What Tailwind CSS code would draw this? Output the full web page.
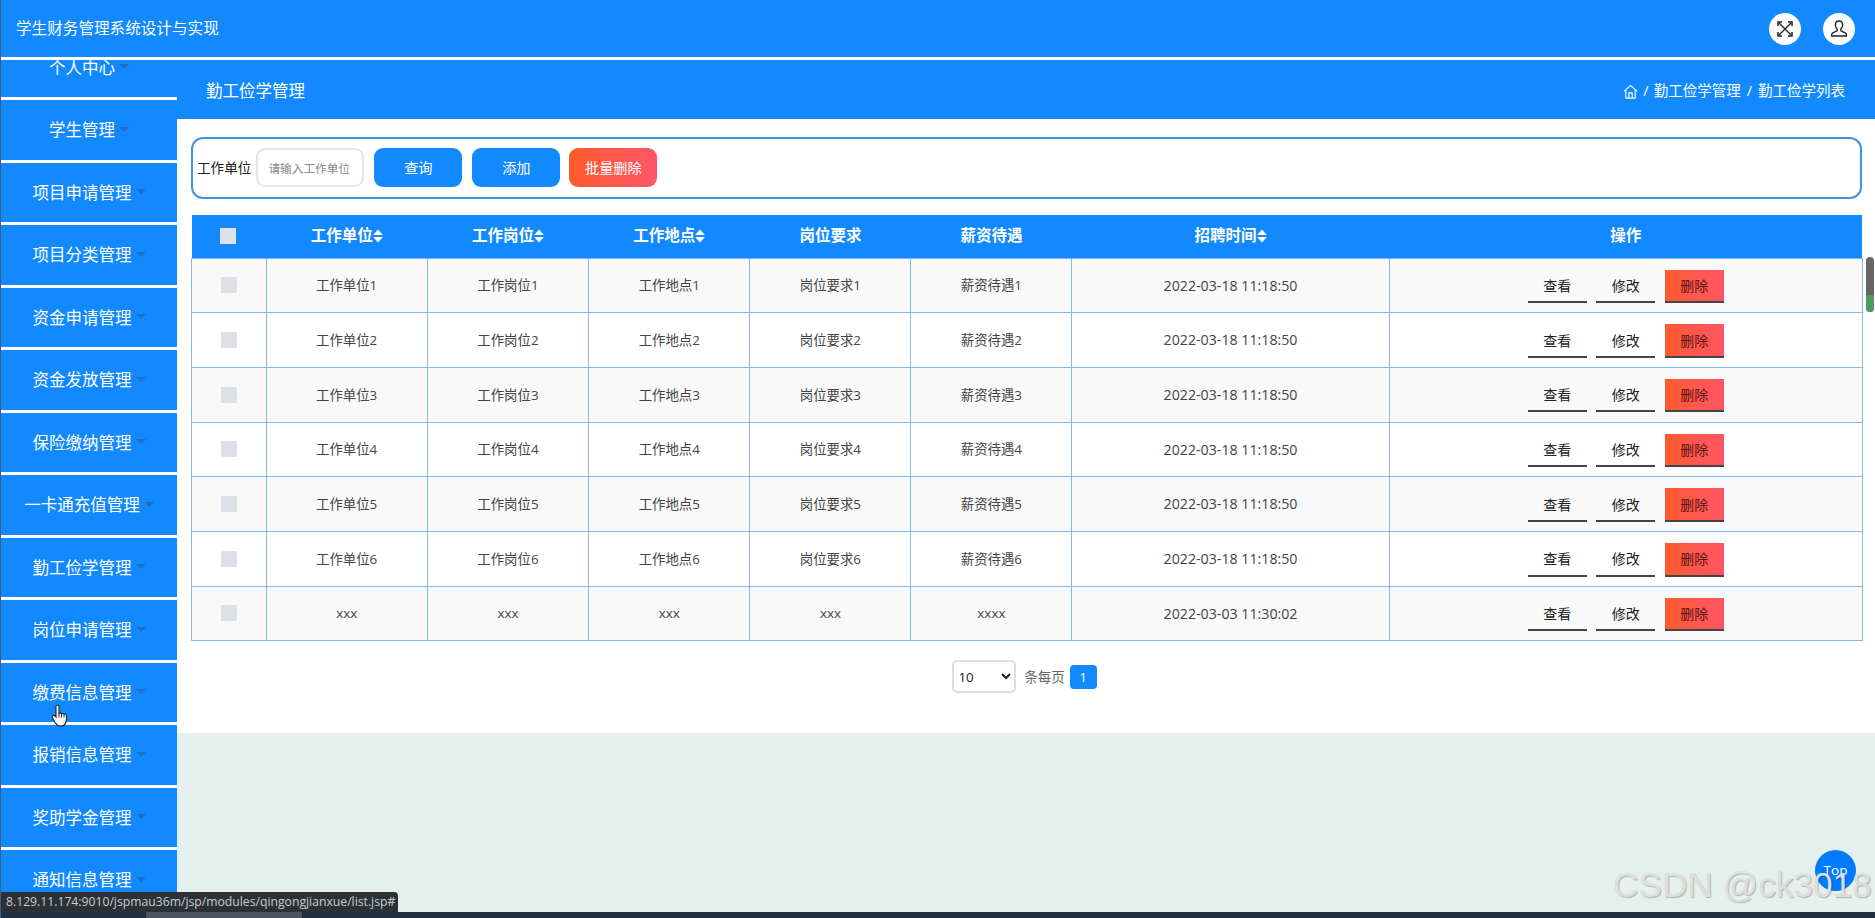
<!DOCTYPE html>
<html lang="zh-CN">
  <head>
    <meta charset="UTF-8" />
    <meta name="viewport" content="width=device-width, initial-scale=1.0" />
    <title>学生财务管理系统设计与实现</title>
    <script src="https://cdn.jsdelivr.net/npm/@tailwindcss/browser@4"></script>
  </head>
  <body class="overflow-hidden">
    <div class="relative flex flex-col h-[918px] w-full overflow-hidden border-l border-[#3a5f86] bg-white text-[#444] [font-family:'Open_Sans','Noto_Sans_CJK_SC',sans-serif]">
      <!-- top bar -->
      <header class="flex items-center justify-between h-[57px] shrink-0 bg-[#1289ff] pl-[15px] pr-[20px] text-white">
        <span class="text-[15.6px]">学生财务管理系统设计与实现</span>
        <div class="flex items-center gap-[22px]">
          <button class="flex items-center justify-center w-[32px] h-[32px] rounded-full bg-white">
            <svg class="w-[18px] h-[18px]" viewBox="0 0 18 18" fill="none" stroke="#222" stroke-width="1.4">
              <path d="M3 3l12 12M15 3L3 15" />
              <path d="M2 6V2h4M12 2h4v4M16 12v4h-4M6 16H2v-4" stroke-width="1.5" />
            </svg>
          </button>
          <button class="flex items-center justify-center w-[32px] h-[32px] rounded-full bg-white">
            <svg class="w-[20px] h-[20px]" viewBox="0 0 20 20" fill="none" stroke="#222" stroke-width="1.4">
              <path d="M10 2c-2.3 0-3.6 1.700-3.6 3.900 0 1.800.8 3.200 1.700 4.100.4.6.3 1.600-.5 2.100-1.400.8-3.900 1.300-4.600 2.500-.3.6-.4 1.400-.4 2.400h14.800c0-1-.1-1.800-.4-2.400-.7-1.200-3.200-1.700-4.600-2.500-.8-.5-.9-1.500-.5-2.100.9-.9 1.700-2.300 1.700-4.100C13.600 3.700 12.300 2 10 2z" />
            </svg>
          </button>
        </div>
      </header>
      <div class="h-[2.5px] shrink-0 bg-white"></div>

      <div class="flex flex-1 min-h-0">
        <!-- side menu, scrolled a little -->
        <nav class="w-[176px] shrink-0 overflow-hidden bg-white">
          <div id="menu" class="-mt-[22px]"></div>
        </nav>

        <main class="flex flex-col flex-1 min-w-0 bg-[#e4f0ec]">
          <div class="flex items-center justify-between h-[59.5px] shrink-0 bg-[#1289ff] pl-[29px] pr-[30px] pt-[4px] text-white">
            <span class="text-[16.5px]">勤工俭学管理</span>
            <div class="flex items-center gap-[5px] text-[14.5px]">
              <svg class="w-[15px] h-[15px]" viewBox="0 0 16 16" fill="none" stroke="#fff" stroke-width="1.2">
                <path d="M1 7.800L8 1.500l7 6.300" />
                <path d="M3 6.500V15h10V6.500" />
                <path d="M6.200 15V9.500h3.600V15" />
              </svg>
              <span>/</span>
              <span>勤工俭学管理</span>
              <span class="mx-[1px]">/</span>
              <span>勤工俭学列表</span>
            </div>
          </div>

          <section class="h-[614px] shrink-0 bg-white pl-[14px] pr-[13px] pt-[18px]">
            <!-- search -->
            <div class="flex items-center h-[61.5px] rounded-[12px] border-2 border-[#3f93e6] pl-[4px] text-[13.6px] text-[#222]">
              <span class="mr-[5px]">工作单位</span>
              <input
                placeholder="请输入工作单位"
                class="w-[108px] h-[39px] rounded-[9px] border-2 border-[#e6e6e6] bg-white pl-[10px] text-[13.6px] outline-none placeholder:text-[11.7px] placeholder:text-[#888]"
              />
              <button class="ml-[10px] w-[88px] h-[39px] rounded-[9px] bg-[#1289ff] text-[14.2px] text-white">查询</button>
              <button class="ml-[10px] w-[88px] h-[39px] rounded-[9px] bg-[#1289ff] text-[14.2px] text-white">添加</button>
              <button class="ml-[9px] w-[88px] h-[39px] rounded-[9px] bg-gradient-to-r from-[#ff5a22] to-[#ff5568] text-[14.2px] text-white">批量删除</button>
            </div>

            <!-- table -->
            <table class="mt-[16px] w-[1671px] table-fixed border-collapse text-[13.4px]">
              <colgroup>
                <col class="w-[74.5px]" />
                <col class="w-[161.3px]" />
                <col class="w-[161.3px]" />
                <col class="w-[161.3px]" />
                <col class="w-[161px]" />
                <col class="w-[161px]" />
                <col class="w-[317.300px]" />
                <col class="w-[473.300px]" />
              </colgroup>
              <thead>
                <tr id="head" class="h-[43.5px] bg-[#1289ff] text-[15.5px] font-bold text-white"></tr>
              </thead>
              <tbody id="rows"></tbody>
            </table>

            <!-- pagination -->
            <div class="flex items-center justify-center gap-[8px] mt-[19px] pr-[4px] text-[13.4px] text-[#666]">
              <select class="w-[64px] h-[33px] rounded-[5px] border-2 border-[#ddd] bg-white text-[13.4px] text-[#222]">
                <option>10</option>
                <option>20</option>
                <option>50</option>
              </select>
              <div class="flex items-center gap-[5px]">
                <span>条每页</span>
                <button class="w-[27px] h-[24px] rounded-[4px] bg-[#1289ff] text-[13.4px] text-white">1</button>
              </div>
            </div>
          </section>
        </main>
      </div>

      <!-- bottom scrollbar -->
      <div class="h-[6px] shrink-0 bg-[#1f3042]">
        <div class="ml-[145px] w-[156px] h-full bg-[#4a5560]"></div>
      </div>

      <!-- overlays -->
      <div class="absolute right-[1px] top-[257px] w-[8px] h-[55px] overflow-hidden rounded-full bg-[#666] flex flex-col justify-end">
        <div class="h-[17px] bg-[#4d9a5c]"></div>
      </div>
      <div class="absolute left-[1814px] top-[850px] flex items-center justify-center w-[41px] h-[41px] rounded-full bg-[#007bff] text-[13.5px] text-white">Top</div>
      <div class="absolute left-[1612px] top-[867px] text-[35.2px] leading-none text-[#dedede] [font-family:'Liberation_Sans',sans-serif] [text-shadow:1px_1px_1px_rgba(0,0,0,0.25)]">CSDN @ck3018</div>
      <div class="absolute left-0 bottom-[6px] h-[20px] w-[397px] rounded-tr-[4px] bg-[#2c3136] pl-[5px] text-[12.2px] leading-[20px] text-[#c9ccd0] whitespace-nowrap">8.129.11.174:9010/jspmau36m/jsp/modules/qingongjianxue/list.jsp#</div>
      <svg class="absolute left-[50px] top-[703px] w-[20px] h-[25px]" viewBox="0 0 20 25">
        <path d="M6.500 2c.9 0 1.500.7 1.500 1.600v6.900c.8-.4 1.900-.4 2.500.2.900-.4 1.900-.2 2.400.4 1-.3 2.300.2 2.500 1.400.4 2.400.1 5.500-.8 7.500-.8 1.900-2.400 3-4.600 3-2.600 0-4.300-.9-5.700-3L1.600 15c-.6-1-.3-2 .5-2.400.8-.4 1.600-.1 2.200.6l.7.9V3.600C5 2.700 5.600 2 6.500 2z" fill="#fff" stroke="#1c2430" stroke-width="1.100" />
        <path d="M8 10.500v4M10.500 10.700v3.800M13 11.100v3.400" stroke="#1c2430" stroke-width="1" fill="none" />
      </svg>
    </div>

    <script>
      const menuNames = [
        "个人中心", "学生管理", "项目申请管理", "项目分类管理", "资金申请管理",
        "资金发放管理", "保险缴纳管理", "一卡通充值管理", "勤工俭学管理", "岗位申请管理",
        "缴费信息管理", "报销信息管理", "奖助学金管理", "通知信息管理",
      ];

      document.getElementById("menu").innerHTML = menuNames.map((name) => `
        <div class="flex items-center justify-center gap-[4px] h-[59.5px] mb-[3px] bg-[#1289ff] pt-[2px] text-[16.5px] text-white">
          <span>${name}</span>
          <span class="mb-[3px] w-0 h-0 border-x-[5px] border-t-[5px] border-x-transparent border-t-[#1a6fc9]"></span>
        </div>
      `).join("");

      const sortIcon = `
        <svg class="w-[10px] h-[14px]" viewBox="0 0 9 13" fill="#fff">
          <path d="M4.500 0.500L9 5.600H0zM0 7.400h9L4.500 12.500z" />
        </svg>`;

      const columns = [
        ["工作单位", true], ["工作岗位", true], ["工作地点", true], ["岗位要求", false],
        ["薪资待遇", false], ["招聘时间", true], ["操作", false],
      ];

      document.getElementById("head").innerHTML = `
        <th><input type="checkbox" class="block mx-auto -translate-x-[1px] w-[16px] h-[16px] appearance-none bg-[#dde0e6]" /></th>
        ${columns.map(([name, sortable]) => `
          <th><span class="inline-flex items-center justify-center">${name}${sortable ? sortIcon : ""}</span></th>
        `).join("")}
      `;

      const data = [1, 2, 3, 4, 5, 6].map((n) => [
        `工作单位${n}`, `工作岗位${n}`, `工作地点${n}`, `岗位要求${n}`, `薪资待遇${n}`, "2022-03-18 11:18:50",
      ]);
      data.push(["xxx", "xxx", "xxx", "xxx", "xxxx", "2022-03-03 11:30:02"]);

      document.getElementById("rows").innerHTML = data.map((row, i) => `
        <tr class="h-[54.7px] ${i % 2 === 0 ? "bg-[#f9f9f9]" : "bg-white"}">
          <td class="border border-[#7dbaf5]"><input type="checkbox" class="block mx-auto w-[16px] h-[16px] appearance-none bg-[#dde0e6]" /></td>
          ${row.map((text, c) => `
            <td class="border border-[#7dbaf5] text-center ${c === 5 ? "text-[14.2px]" : ""}">${text}</td>
          `).join("")}
          <td class="border border-[#7dbaf5]">
            <div class="flex items-center justify-center gap-[9.5px] pt-[2px] text-[14px]">
              <button class="w-[59px] h-[33.5px] border-b-2 border-[#444] text-[#222]">查看</button>
              <button class="w-[59px] h-[33.5px] border-b-2 border-[#444] text-[#222]">修改</button>
              <button class="w-[59px] h-[33.5px] border-b-2 border-[#444] bg-gradient-to-r from-[#ff5a2c] to-[#ff5564] text-[#5c1414]">删除</button>
            </div>
          </td>
        </tr>
      `).join("");
    </script>
  </body>
</html>
